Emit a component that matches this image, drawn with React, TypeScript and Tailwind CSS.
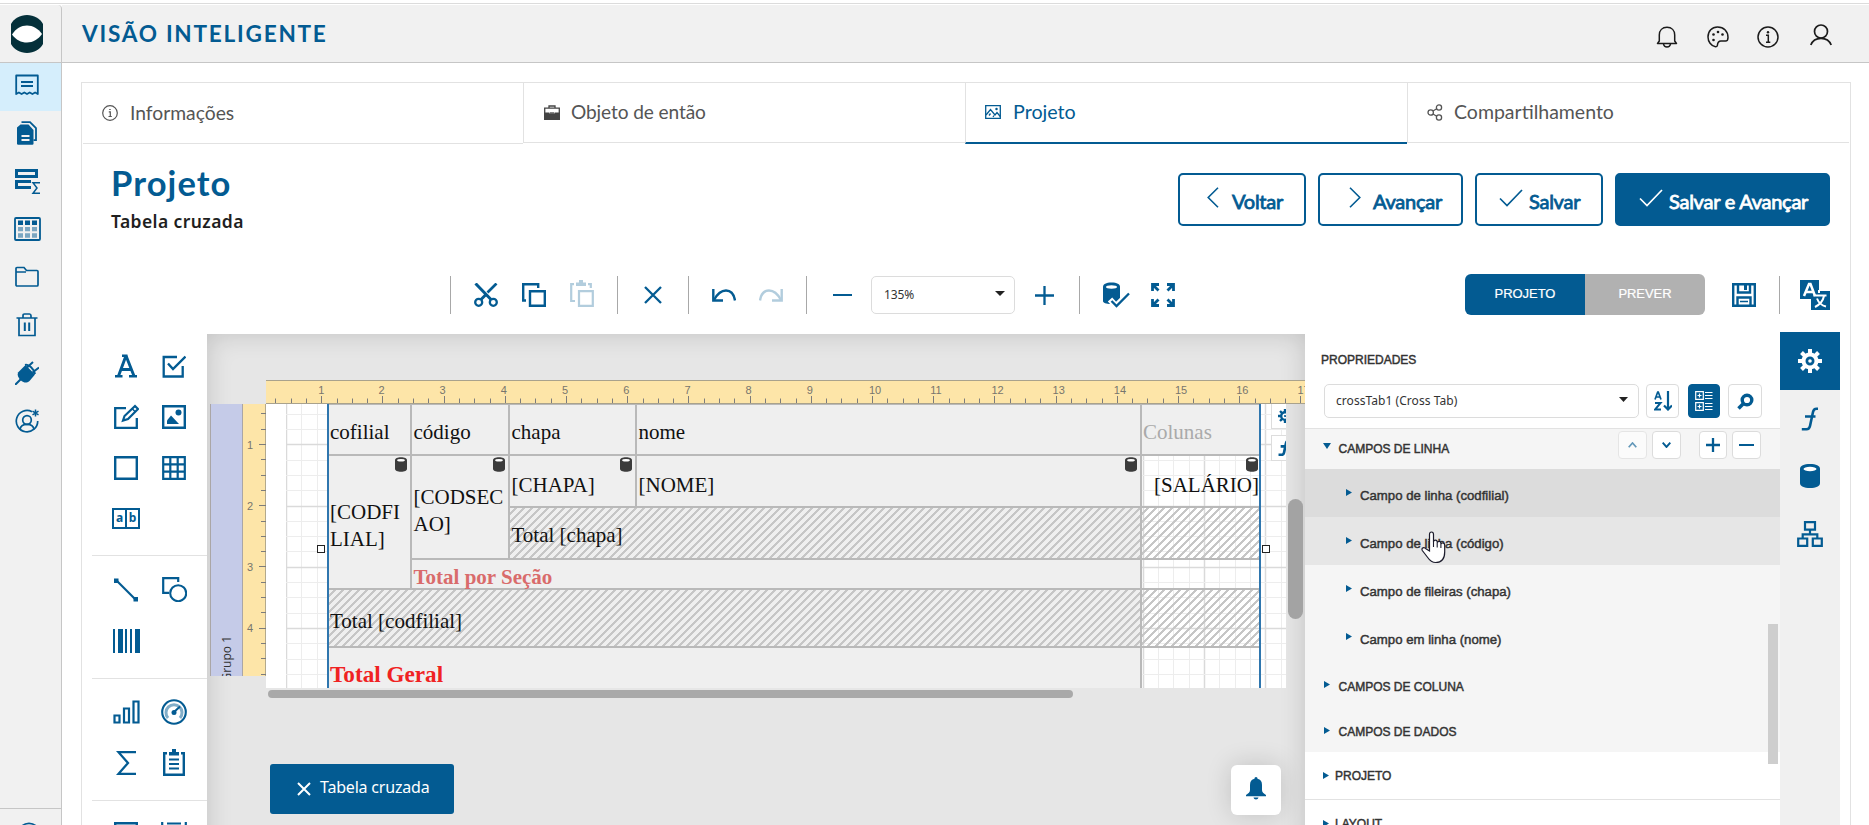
import type { ReactNode } from "react";

const BLUE = "#035b92";

type IconProps = { w?: number; h?: number; vb?: string; color?: string; sw?: number; className?: string; children: ReactNode };

function Icon({ w = 24, h = 24, vb = "0 0 24 24", color = BLUE, sw = 2, className = "", children }: IconProps) {
  return (
    <svg width={w} height={h} viewBox={vb} fill="none" stroke={color} strokeWidth={sw} className={"shrink-0 " + className}>
      {children}
    </svg>
  );
}

function Cylinder({ w, h, color = BLUE }: { w: number; h: number; color?: string }) {
  return (
    <svg width={w} height={h} viewBox="0 0 20 24" className="shrink-0">
      <path d="M0 5C0 1.5 4 0 10 0s10 1.500 10 5v14c0 3.500-4 5-10 5S0 22.500 0 19z" fill={color} />
      <ellipse cx="10" cy="5" rx="6.500" ry="2.200" fill="#fff" />
    </svg>
  );
}

/* ---------- left navigation ---------- */

const navIcons: ReactNode[] = [
  <Icon sw={1.8}>
    <path d="M1.200 21V2.500h21.600V21l-2.700-1.500-2.700 1.500-2.700-1.500L12 21l-2.700-1.500L6.600 21l-2.700-1.500z" strokeLinejoin="round" />
    <path d="M6 9h12M6 13h12" />
  </Icon>,
  <Icon>
    <path d="M6.500 1.200h8.500l6 6v12h-2.500" strokeWidth="1.800" />
    <path d="M5.500 3.500h8L18.500 9v13.500a1.200 1.200 0 0 1-1.200 1.200H3.200A1.200 1.200 0 0 1 2 22.500V6.500z" fill={BLUE} stroke="none" />
    <path d="M6.500 15h8M6.500 19h8" stroke="#f1f1f1" strokeWidth="1.800" />
  </Icon>,
  <Icon w={27} h={27} vb="0 0 27 27" className="mt-px">
    <path d="M2.500 2.500h20v6h-20zM17 13.500H2.500v6H17" strokeWidth="3" />
    <path d="M26 14.700h-7l4 5.300-4 5.300h7" strokeWidth="1.500" />
  </Icon>,
  <Icon w={27} h={24} vb="0 0 27 24" sw={1.8}>
    <rect x="1" y="1" width="25" height="22" rx="1" />
    <path d="M4 5.700h5M11 5.700h5M18 5.700h5" strokeWidth="4.500" />
    <path d="M4 12.200h5M11 12.200h5M18 12.200h5M4 18.500h5M11 18.500h5M18 18.500h5" strokeWidth="4.300" opacity=".5" />
  </Icon>,
  <Icon sw={1.7}>
    <path d="M1 20V3.500A1 1 0 0 1 2 2.500h7l2.500 3H22a1 1 0 0 1 1 1V20a1 1 0 0 1-1 1H2a1 1 0 0 1-1-1zM1 7h10" />
  </Icon>,
  <Icon sw={1.7}>
    <path d="M1.500 5h21M4 5v17.500h16V5M8 5V2.700C8 1.500 8.500 1 9.500 1h5c1 0 1.500.5 1.500 1.700V5" />
    <path d="M9.800 9.500v8.500M14.200 9.500v8.500" strokeWidth="2" />
  </Icon>,
  <Icon sw={2}>
    <path d="M3 11.500 10.500 4 20 13.500 14.500 20c-3 2.500-6 1.500-8 0C3 17 2 14 3 11.500z" fill={BLUE} stroke="none" />
    <path d="M12 6.500 18 1M17.500 11.500 24 6.500M0 24l6-6M10 4c4-1 9 4 10 9" />
  </Icon>,
  <Icon sw={1.7}>
    <path d="M17 2.700A10.700 10.700 0 1 0 22.700 12" />
    <circle cx="12" cy="11" r="4.300" />
    <path d="M5 20.500c.5-3.500 3.500-5.200 7-5.200s6.500 1.700 7 5.200" />
    <path d="M20.500.5v7M17.500 2.200l6 3.600M17.500 5.800l6-3.600" strokeWidth="1.500" />
  </Icon>,
];

function Sidebar() {
  return (
    <nav className="flex h-full w-[62px] shrink-0 flex-col rounded-tr border-r border-[#c6c6c6] bg-[#f1f1f1]">
      <div className="flex h-[58px] shrink-0 items-center justify-center border-b border-[#c6c6c6] pr-[7px]">
        <svg width="32" height="38" viewBox="0 0 32 38">
          <path d="M0 9C3 3.500 9 0 16 0s13 3.500 16 9v20c-3 5.500-9 9-16 9S3 34.500 0 29z" fill="#04303a" />
          <path d="M1 19.500C5 13.500 10 10.500 16 10.500s11 3 15 8.500c-4 5.500-9 8.500-15 8.500S5 25 1 19.500z" fill="#fff" />
        </svg>
      </div>
      {navIcons.map((icon, i) => (
        <div key={i} className={"flex h-12 shrink-0 items-center justify-center pr-[7px] pb-1 " + (i === 0 ? "bg-[#d5eefc]" : "")}>
          {icon}
        </div>
      ))}
      <div className="mt-[361px] flex h-12 shrink-0 justify-center border-t border-[#c6c6c6] pt-[13px] pr-[4px]">
        <Icon sw={1.7}><circle cx="12" cy="12" r="10.700" /></Icon>
      </div>
    </nav>
  );
}

/* ---------- page header ---------- */

function Header() {
  return (
    <header className="flex h-[58px] shrink-0 items-center border-b border-[#c6c6c6] bg-[#f1f1f1] pl-5">
      <h1 className="mt-px font-['Lato',sans-serif] text-[22.600px] leading-none font-bold tracking-[1.750px] text-[#035b92]">VISÃO INTELIGENTE</h1>
      <div className="mr-[37px] ml-auto flex items-center">
        <Icon w={22} h={22} color="#1b1b1b" sw={1.5} className="mt-[7px]" vb="0 0 22 22">
          <path d="M1.500 17.500 3.300 15V9c0-4.500 3-7.700 7.700-7.700s7.700 3.200 7.700 7.700v6l1.800 2.500z" strokeLinejoin="round" />
          <path d="M7.500 18c.3 2 1.700 3 3.500 3s3.200-1 3.500-3" />
        </Icon>
        <Icon w={22} h={22} color="#1b1b1b" sw={1.5} className="mt-[7px] ml-[29px]" vb="0 0 22 22">
          <path d="M10.500 1C5 1 1 5 1 11c0 4.500 3 9 7.500 9.800 1 0 1.700-.5 1.900-1.500.2-2.500.6-4.300 3.600-4.300h4.500c1.700 0 2.500-1.300 2.500-3.500C21 5.500 17 1 10.500 1z" />
          <g fill="#1b1b1b" stroke="none"><circle cx="11" cy="6" r="1.300" /><circle cx="6.500" cy="8.500" r="1.300" /><circle cx="15.500" cy="8.500" r="1.300" /><circle cx="6.500" cy="14" r="1.300" /></g>
        </Icon>
        <Icon w={22} h={22} color="#1b1b1b" sw={1.5} className="mt-[7px] ml-[28px]" vb="0 0 22 22">
          <circle cx="11" cy="11" r="10" />
          <path d="M9 9.300h2.300v7M9 16.300h4.300" />
          <circle cx="11" cy="6.200" r="1.200" fill="#1b1b1b" stroke="none" />
        </Icon>
        <Icon w={22} h={22} color="#1b1b1b" sw={1.700} className="mt-[2px] ml-[31px]" vb="0 0 22 22">
          <circle cx="11" cy="7.500" r="6.500" />
          <path d="M.8 21C2.500 16.500 6.500 14.300 11 14.300S19.500 16.500 21.200 21" />
        </Icon>
      </div>
    </header>
  );
}

/* ---------- wizard tabs and title ---------- */

function StepTabs() {
  const label = "font-['Lato',sans-serif] leading-none ";
  return (
    <div className="flex h-[62px] shrink-0 text-[#555]">
      <div className="ml-px flex h-[61px] w-[440px] items-center border-b border-[#e2e2e2] pb-[4px] pl-[19px]">
        <Icon w={16} h={16} color="#555" sw={1.200} vb="0 0 16 16" className="mt-[3px]">
          <circle cx="8" cy="8" r="7.300" /><path d="M6.800 6.800h1.500v4.700M6.500 11.500h3.300M7.200 4.500h1.500" />
        </Icon>
        <span className={label + "mt-[3px] ml-[12px] text-[19.300px]"}>Informações</span>
      </div>
      <div className="flex h-[60px] w-[442px] items-center border-b border-l border-[#e2e2e2] pb-[4px] pl-5">
        <Icon w={16} h={15} color="#444" sw={1.300} vb="0 0 16 15" className="mt-[3px]">
          <path d="M5 3V1h6v2" /><path d="M.7 3.200h14.600v6H.7z" /><path d="M0 7.500h5.500v1.500h5V7.500H16V15H0z" fill="#444" stroke="none" /><path d="M6 8h4" />
        </Icon>
        <span className={label + "mt-[3px] ml-[11px] text-[19.100px] tracking-[-0.100px]"}>Objeto de então</span>
      </div>
      <div className="flex h-[61px] w-[442px] items-center border-b-2 border-l border-b-[#035b92] border-l-[#e2e2e2] pb-[4px] pl-[19px] text-[#035b92]">
        <Icon w={16} h={14} sw={1.300} vb="0 0 16 14" className="mt-[2px]">
          <path d="M.7.700h14.600v12.600H.700z" /><path d="M1 10l4.500-5.500L10 10l2-2.500 3.300 4M4 10.500l1.500-2M8 12l1-1.500" /><circle cx="11.500" cy="4" r=".6" />
        </Icon>
        <span className={label + "mt-[3px] ml-[12px] text-[19.700px]"}>Projeto</span>
      </div>
      <div className="mr-px flex h-[60px] grow items-center border-b border-l border-[#e2e2e2] pb-[4px] pl-[19px]">
        <Icon w={16} h={17} color="#555" sw={1.300} vb="0 0 16 17" className="mt-[3px]">
          <circle cx="3.700" cy="8.500" r="2.700" /><circle cx="12" cy="3.500" r="2.600" /><circle cx="12" cy="13.500" r="2.600" /><path d="M6 7l3.700-2.200M6 10l3.700 2.200" />
        </Icon>
        <span className={label + "mt-[3px] ml-[11px] text-[19.500px]"}>Compartilhamento</span>
      </div>
    </div>
  );
}

function TitleRow() {
  const btn = "flex h-[53px] items-center rounded-[5px] border-2 border-[#035b92] font-['Lato',sans-serif] text-[20px] leading-none tracking-[-0.250px] [-webkit-text-stroke:0.800px]";
  const check = (c: string) => (
    <Icon w={24} h={18} vb="0 0 24 18" color={c} sw={1.700} className="mb-1"><path d="M1 9.500l7 7L23 1" /></Icon>
  );
  return (
    <div className="flex h-[129px] shrink-0 items-start pt-[17px] pr-[20px] pl-[29px]">
      <div className="pt-px">
        <h2 className="font-['Lato',sans-serif] text-[34.500px] leading-[40px] font-bold tracking-[1.100px] text-[#035b92]">Projeto</h2>
        <p className="mt-[8px] font-['Noto_Sans',sans-serif] text-[17.500px] leading-[20px] font-semibold tracking-[0.400px] text-[#1f1f1f]">Tabela cruzada</p>
      </div>
      <div className="mt-[11px] ml-auto flex gap-3 text-[#035b92]">
        <button className={btn + " w-[128px] pl-[27px]"}>
          <Icon w={12} h={21} vb="0 0 12 21" sw={1.600} className="mb-1"><path d="M11 .8 1.200 10.500 11 20.200" /></Icon>
          <span className="mt-[3px] ml-[13px]">Voltar</span>
        </button>
        <button className={btn + " w-[145px] pl-[29px]"}>
          <Icon w={12} h={21} vb="0 0 12 21" sw={1.600} className="mb-1"><path d="M1 .8l9.800 9.700L1 20.200" /></Icon>
          <span className="mt-[3px] ml-[12px]">Avançar</span>
        </button>
        <button className={btn + " w-[128px] pl-[22px]"}>
          {check(BLUE)}
          <span className="mt-[3px] ml-[6px]">Salvar</span>
        </button>
        <button className={btn + " w-[215px] bg-[#035b92] pl-[22px] text-white"}>
          {check("#fff")}
          <span className="mt-[3px] ml-[6px]">Salvar e Avançar</span>
        </button>
      </div>
    </div>
  );
}

/* ---------- designer toolbar ---------- */

function Sep({ className }: { className: string }) {
  return <div className={"h-[38px] w-px shrink-0 bg-[#a8a8a8] " + className} />;
}

function Toolbar() {
  return (
    <div className="flex h-[42px] shrink-0 items-center">
      <Sep className="ml-[368px]" />
      <Icon className="ml-[23px]" sw={2.300}>
        <circle cx="4.700" cy="19.300" r="3.500" /><circle cx="19.300" cy="19.300" r="3.500" />
        <path d="M1.500.5 17 16.500M7 16.500l5-5" strokeWidth="3" /><path d="M22.500.500 13.500 9.500" strokeWidth="2.700" />
      </Icon>
      <Icon className="ml-6" sw={2.400}><path d="M4 17.500H1.200V1.200h15V5M8 8.200h14.800v14.600H8z" /></Icon>
      <Icon className="mb-[3px] ml-6 opacity-30" h={27} vb="0 0 24 27"><path d="M5 21H1.200V4.200H4M18 4.200h2.800V8M9 11.200h13.800v14.600H9z" strokeWidth="2.200" /><path d="M6 2.500h3V0h4v2.500h3V6H6z" fill={BLUE} stroke="none" /></Icon>
      <Sep className="ml-[23px]" />
      <Icon className="ml-[26px]" w={18} h={18} vb="0 0 18 18" sw={2.300}><path d="M1 1l16 16M17 1 1 17" /></Icon>
      <Sep className="ml-[26px]" />
      <Icon className="ml-[23px]" w={24} h={13} vb="0 0 24 13"><path d="M1.300 0v11.500H11" strokeWidth="2.400" /><path d="M2 11C6 3.500 10 1.500 14 1.500c5 0 8 4 9 10" strokeWidth="2.400" /></Icon>
      <Icon className="ml-[23px] opacity-30" w={24} h={13} vb="0 0 24 13"><path d="M22.700 0v11.500H13" strokeWidth="2.400" /><path d="M22 11C18 3.500 14 1.500 10 1.500c-5 0-8 4-9 10" strokeWidth="2.400" /></Icon>
      <Sep className="ml-[23px]" />
      <div className="ml-[26px] h-[2px] w-[19px] bg-[#035b92]" />
      <div className="ml-[19px] flex h-[38px] w-[144px] items-center justify-between rounded-[5px] border border-[#dcdcdc] pr-[9px] pl-3 font-['Noto_Sans',sans-serif] text-[12px] tracking-[-0.100px] text-[#333]">
        135%
        <svg width="10" height="5" viewBox="0 0 10 5" className="mb-1"><path d="M0 0h10L5 5z" fill="#222" /></svg>
      </div>
      <Icon className="ml-5" w={19} h={19} vb="0 0 19 19" sw={2.300}><path d="M0 9.500h19M9.500 0v19" /></Icon>
      <Sep className="ml-[25px]" />
      <Icon className="ml-[23px]" w={27} h={26} vb="0 0 27 26">
        <path d="M0 5C0 2 3 .5 8.500.5S17 2 17 5v17H8c-5 0-8-1-8-3z" fill={BLUE} stroke="none" />
        <ellipse cx="8.500" cy="5" rx="5.500" ry="1.700" fill="#fff" stroke="none" />
        <path d="M7 17.500l6 6.500L26.500 11" stroke="#fff" strokeWidth="6" /><path d="M8.500 19l5 5L26 11.500" strokeWidth="2.300" />
      </Icon>
      <Icon className="ml-[21px]" sw={2.200}>
        <path d="M1.500 8V1.500H8M1.500 1.500l6 6M16 1.500h6.500V8M22.500 1.500l-6 6M1.500 16v6.500H8M1.500 22.500l6-6M22.500 16v6.500H16M22.500 22.500l-6-6" strokeWidth="2.800" />
      </Icon>
      <div className="ml-auto mb-px flex h-[41px] w-60 overflow-hidden rounded-[6px] font-['Liberation_Sans',sans-serif] text-[13px] tracking-[-0.050px] text-white [-webkit-text-stroke:0.200px]">
        <div className="flex w-1/2 items-center justify-center bg-[#035b92] pb-px">PROJETO</div>
        <div className="flex w-1/2 items-center justify-center bg-[#b1b1b1] pb-px">PREVER</div>
      </div>
      <Icon className="ml-[27px]" sw={2.400}>
        <path d="M1.200 1.200h21.600v21.600H1.200zM6 1.500v8h12v-8M5.500 22.500v-8h13v8" /><path d="M13.500 2v5" strokeWidth="3" /><path d="M8 18.500h8" strokeWidth="1.500" />
      </Icon>
      <Sep className="ml-[23px]" />
      <svg width="30" height="30" viewBox="0 0 30 30" className="mr-[20px] ml-[20px] shrink-0">
        <path d="M0 0h19v11h11v19H11V19H0z" fill={BLUE} />
        <path d="M4 16 9 4h1.500l4.500 12M6 12h7" stroke="#fff" strokeWidth="2.500" fill="none" />
        <path d="M19 10v3M13.500 15.500h13M15 27c5-2.500 8-6 9-11M17 18.500c1.500 4 4.500 7 9 8" stroke="#fff" strokeWidth="2" fill="none" />
      </svg>
    </div>
  );
}

/* ---------- toolbox ---------- */

const toolGroups: { pad: string; items: (ReactNode | null)[] }[] = [
  {
    pad: "pt-[9px] pb-[10px]",
    items: [
      <Icon w={24} h={24}><path d="M4.500 22 11.500 3h1L20 22M7.500 15.500h9" strokeWidth="2.900" /><path d="M8 1.800h5.500M1 22.300h7.500M15 22.300h8" strokeWidth="2.600" /></Icon>,
      <Icon><path d="M15 3H1.700v19.500h19V12" strokeWidth="2.300" /><path d="M6 9.500l5 5.500L23.500 2.500" strokeWidth="2.400" /></Icon>,
      <Icon w={26} h={26} vb="0 0 26 26"><path d="M13 4.200H2.200v19.600h21.600V14" strokeWidth="2.300" /><path d="M10 16.500l1.500-4.500L22 2l3 3-10 10z" strokeWidth="2.200" /><path d="M19 4.500l3.500 3.500" strokeWidth="1.500" /></Icon>,
      <Icon><path d="M1.200 1.200h21.600v21.600H1.200z" strokeWidth="2.400" /><circle cx="16.500" cy="7.500" r="3" fill={BLUE} stroke="none" /><path d="M5 19v-3.500l4-5 8 8.500z" fill={BLUE} stroke="none" /></Icon>,
      <Icon><path d="M1.200 1.200h21.600v21.600H1.200z" strokeWidth="2.400" /></Icon>,
      <Icon><path d="M1.200 1.200h21.600v21.600H1.200zM8.300 1v22M15.700 1v22M1 8.300h22M1 15.700h22" strokeWidth="2.200" /></Icon>,
      <div className="flex h-[21px] w-7 border-2 border-[#035b92] text-center font-['Noto_Sans',sans-serif] text-[12px] leading-[15px] font-bold text-[#035b92]">
        <span className="flex-1 border-r-2 border-[#035b92]">a</span>
        <span className="flex-1">b</span>
      </div>,
      null,
    ],
  },
  {
    pad: "pt-[9px] pb-[11px]",
    items: [
      <Icon><path d="M2 2l20 20" strokeWidth="2.200" /><path d="M0 .5h4.500V5H0zM19.500 19H24v4.500h-4.500z" fill={BLUE} stroke="none" /></Icon>,
      <Icon w={25} h={25} vb="0 0 25 25"><path d="M7 15.800H1.200V1.200h15V5" strokeWidth="2.200" /><circle cx="16.200" cy="16.200" r="8" strokeWidth="2.100" /></Icon>,
      <svg width="27" height="24" viewBox="0 0 27 24" fill={BLUE}><path d="M0 0h2v24H0zM5 0h5v24H5zM12 0h2v24h-2zM17 0h2v24h-2zM22 0h5v24h-5z" /></svg>,
      null,
    ],
  },
  {
    pad: "pt-[8px] pb-[11px]",
    items: [
      <Icon w={27} h={24} vb="0 0 27 24"><path d="M1.500 15.500h5v7h-5zM11 8.500h5v14h-5zM20.500 1.500h5v21h-5z" strokeWidth="2.200" /></Icon>,
      <Icon w={26} h={26} vb="0 0 26 26"><circle cx="13" cy="13" r="11.800" strokeWidth="2.100" /><path d="M7 19a8 8 0 1 1 12 0" strokeWidth="3" opacity=".5" /><path d="M12 14l7-6.500" strokeWidth="2" /><circle cx="13" cy="13.500" r="2.500" fill={BLUE} stroke="none" /></Icon>,
      <Icon w={20} h={24} vb="0 0 20 24"><path d="M20 1.200H2.500L12 12 2.500 22.800H20" strokeWidth="2.300" /></Icon>,
      <Icon w={22} h={28} vb="0 0 22 28"><path d="M4 4.200H1.200v21.600h19.600V4.200H18" strokeWidth="2.400" /><path d="M6 3h3V0h4v3h3v3.500H6z" fill={BLUE} stroke="none" /><path d="M6 10.500h10M6 15h10M6 19.500h10" strokeWidth="2.200" /></Icon>,
    ],
  },
  {
    pad: "pt-[8px]",
    items: [
      <Icon><path d="M1.200 1.200h21.600v21.600H1.200z" strokeWidth="2.400" /></Icon>,
      <Icon w={26} vb="0 0 26 24"><path d="M1.200 0v24M24.800 0v24M6 1.500h14M6 12h14" strokeWidth="2.200" /></Icon>,
    ],
  },
];

function Toolbox() {
  return (
    <div className="w-[125px] shrink-0 pl-[10px]">
      {toolGroups.map((g, i) => (
        <div key={i} className={"grid grid-cols-[48px_48px] border-b border-[#e2e2e2] pl-[10px] " + g.pad}>
          {g.items.map((it, j) => (
            <div key={j} className="flex h-[51px] items-center justify-center pb-[2px]">{it}</div>
          ))}
        </div>
      ))}
    </div>
  );
}

/* ---------- report surface ---------- */

const UNIT = 61.2;

function TopRuler() {
  const ticks = Array.from({ length: 69 }, (_, i) => i + 1).filter((i) => (i * UNIT) / 4 - 6 > 2);
  return (
    <svg width="1039" height="24" className="block shrink-0 bg-[#fde5a8]">
      <path d="M0 .5h1039M0 23.500h1039" stroke="#a9a28c" />
      {ticks.map((i) => {
        const x = Math.round(-6 + (i * UNIT) / 4);
        return <path key={i} d={`M${x + 0.5} ${i % 4 ? 18.500 : 16}V23`} stroke="#7c7c7c" />;
      })}
      {Array.from({ length: 17 }, (_, i) => (
        <text key={i} x={(i > 0 && i < 9 ? -10 : -9) + (i + 1) * UNIT} y="14" fontSize="11" fill="#77756d" fontFamily="Liberation Sans">{i + 1}</text>
      ))}
    </svg>
  );
}

function SideRuler() {
  return (
    <svg width="23" height="272" className="block shrink-0 bg-[#fde5a8]">
      <path d="M22.500 0v272" stroke="#b3a98c" />
      {Array.from({ length: 18 }, (_, i) => {
        const y = Math.round(9.400 + (i * UNIT) / 4);
        return <path key={i} d={`M${(i + 2) % 4 ? 18 : 16} ${y + 0.500}H23`} stroke="#7c7c7c" />;
      })}
      {[1, 2, 3, 4].map((n) => (
        <text key={n} x="4" y={44.500 + (n - 1) * UNIT} fontSize="11" fill="#77756d" fontFamily="Liberation Sans">{n}</text>
      ))}
    </svg>
  );
}

function GridPaper() {
  return (
    <svg width="1000" height="284" className="absolute top-0 left-[20px]">
      {Array.from({ length: 66 }, (_, i) => (
        <path key={i} d={`M${Math.round((i * UNIT) / 4) + 0.5} 0v284`} stroke={i % 4 ? "#ededed" : "#dadada"} strokeWidth={i % 4 ? 1 : 1.500} />
      ))}
      {Array.from({ length: 19 }, (_, i) => (
        <path key={i} d={`M0 ${Math.round(9.700 + (i * UNIT) / 4) + 0.5}h1000`} stroke={(i + 2) % 4 ? "#ededed" : "#dadada"} strokeWidth={(i + 2) % 4 ? 1 : 1.500} />
      ))}
    </svg>
  );
}

const HATCH = "bg-[repeating-linear-gradient(135deg,transparent_0px,transparent_3.200px,#c6c6c6_3.400px,#c6c6c6_5.457px,transparent_5.657px)]";

function Cell({ className, children, bound }: { className: string; children?: ReactNode; bound?: "inner" | "edge" }) {
  return (
    <div className={"relative flex items-center border-[#b9b9b9] " + className}>
      {children}
      {bound && (
        <span className={"absolute top-px " + (bound === "edge" ? "right-px" : "right-[3px]")}>
          <Cylinder w={12} h={15} color="#3b3b3b" />
        </span>
      )}
    </div>
  );
}

function CrossTab() {
  return (
    <div className="absolute top-0 left-[61px] grid h-[300px] w-[934px] grid-cols-[83px_98px_127px_505px_117px] grid-rows-[52px_52px_52px_30px_58px_56px] border-x-2 border-[#2f76ae] font-['Liberation_Serif',serif] text-[21px] leading-[27px] text-[#111]">
      <Cell className="border-t border-r-2 border-b-2 bg-[#efefef] pt-[6px] pl-px">cofilial</Cell>
      <Cell className="border-t border-r-2 border-b-2 bg-[#efefef] pt-[6px] pl-[1.500px]">código</Cell>
      <Cell className="border-t border-r-2 border-b-2 bg-[#efefef] pt-[6px] pl-[1.500px]">chapa</Cell>
      <Cell className="border-t border-r-2 border-b-2 bg-[#efefef] pt-[6px] pl-[1.500px]">nome</Cell>
      <Cell className="border-t border-b-2 bg-[#efefef] pt-[6px] pl-px text-[#aaa]">Colunas</Cell>

      <Cell bound="inner" className="row-span-3 border-r-2 border-b-2 bg-[#efefef] pt-[8px] pl-px">[CODFI<br />LIAL]</Cell>
      <Cell bound="inner" className="row-span-2 border-r-2 border-b-2 bg-[#efefef] pt-[7px] pl-[1.500px]">[CODSEC<br />AO]</Cell>
      <Cell bound="inner" className="border-r-2 border-b-2 bg-[#efefef] pt-[8px] pl-[1.500px]">[CHAPA]</Cell>
      <Cell bound="inner" className="border-r-2 border-b-2 bg-[#efefef] pt-[8px] pl-[1.500px]">[NOME]</Cell>
      <Cell bound="edge" className="justify-end border-b-2 pt-[8px]">[SALÁRIO]</Cell>

      <Cell className={"col-span-2 border-r-2 border-b-2 bg-[#efefef] pt-[4px] pl-[1.500px] " + HATCH}>Total [chapa]</Cell>
      <Cell className={"border-b-2 " + HATCH} />

      <Cell className="col-span-3 border-r-2 border-b-2 bg-[#efefef] pt-[6px] pl-[1.500px] font-bold text-[#d96b6b]">Total por Seção</Cell>
      <Cell className="border-b-2" />

      <Cell className={"col-span-4 border-r-2 border-b-2 bg-[#efefef] pt-[6px] pl-px " + HATCH}>Total [codfilial]</Cell>
      <Cell className={"border-b-2 " + HATCH} />

      <Cell className="col-span-4 border-r-2 bg-[#efefef] pb-[4px] pl-px text-[23.200px] font-bold text-[#f02222]">Total Geral</Cell>
      <Cell className="" />
    </div>
  );
}

function Surface() {
  return (
    <div className="relative mt-[2px] flex h-[560px] w-[1098px] shrink-0 flex-col overflow-hidden bg-[#e6e6e6] shadow-[inset_0_0_26px_rgba(0,0,0,0.160)]">
      <div className="mt-[46px] ml-[59px] flex"><TopRuler /></div>
      <div className="ml-[3px] flex">
        <div className="flex h-[272px] w-[33px] shrink-0 items-start justify-center overflow-hidden border-x border-[#aaa6a6] bg-[#c5cbe8]">
          <span className="mt-[232px] rotate-180 font-['Open_Sans',sans-serif] text-[12px] leading-4 whitespace-nowrap text-[#333] [writing-mode:vertical-rl]">Grupo 1</span>
        </div>
        <SideRuler />
        <div className="relative h-[284px] w-[1020px] shrink-0 overflow-hidden bg-white">
          <GridPaper />
          <CrossTab />
          <div className="absolute top-[141px] left-[51px] size-2 border border-[#222] bg-white" />
          <div className="absolute top-[141px] left-[996px] size-2 border border-[#222] bg-white" />
          <div className="absolute -top-[2px] left-[1005px] flex h-[27px] w-7 items-center border border-[#ddd] bg-white pl-[6px]">
            <Gear size={14} />
          </div>
          <div className="absolute top-[31px] left-[1005px] flex h-[26px] w-7 items-center border border-[#ddd] bg-white pl-[6px]">
            <Fx w={12} h={16} sw={4} />
          </div>
        </div>
      </div>
      <div className="mt-[2px] ml-[61px] h-2 w-[805px] rounded-full bg-[#a9a9a9]" />
      <div className="mt-[66px] ml-[63px] flex h-[51px] w-[1011px] justify-between">
        <button className="flex h-[50px] w-[184px] items-center rounded-[3px] bg-[#035b92] pb-1 pl-[27px] text-white">
          <Icon w={14} h={14} vb="0 0 14 14" color="#fff" sw={2} className="mt-[3px]"><path d="M1 1l12 12M13 1 1 13" /></Icon>
          <span className="ml-[9px] font-['Noto_Sans',sans-serif] text-[16px] tracking-[-0.200px]">Tabela cruzada</span>
        </button>
        <div className="mt-px flex size-[50px] items-center justify-center rounded-[6px] bg-white pb-1 shadow-[0_0_26px_rgba(0,0,0,0.160)]">
          <svg width="20" height="23" viewBox="0 0 20 23" fill={BLUE}>
            <path d="M10 0c1 0 1.500.700 1.500 1.800C14.500 2.500 16 4.500 16 8v5c0 2 1.500 3.500 4 5v1.200H0V18c2.500-1.500 4-3 4-5V8c0-3.500 1.500-5.500 4.500-6.200C8.500.700 9 0 10 0zM7.500 20.500h5c-.3 1.300-1.200 2-2.500 2s-2.200-.700-2.500-2z" />
          </svg>
        </div>
      </div>
      <div className="absolute top-[165px] left-[1081px] h-[120px] w-[15px] rounded-full bg-[#a3a3a3]" />
    </div>
  );
}

/* ---------- properties ---------- */

function Gear({ size, color = BLUE }: { size: number; color?: string }) {
  return (
    <svg width={size} height={size} viewBox="0 0 24 24" fill="none" stroke={color} className="shrink-0">
      <circle cx="12" cy="12" r="6.500" strokeWidth="4" />
      <path d="M12 0v5M12 19v5M0 12h5M19 12h5M3.500 3.500l3.500 3.500M17 17l3.500 3.500M20.500 3.500 17 7M7 17l-3.500 3.500" strokeWidth="4" />
      <circle cx="12" cy="12" r="1.800" fill={color} stroke="none" />
    </svg>
  );
}

function Fx({ w, h, sw = 2.600 }: { w: number; h: number; sw?: number }) {
  return (
    <Icon w={w} h={h} vb="0 0 18 24" sw={sw}>
      <path d="M17 1.800h-1.500c-2 0-3 .8-3.500 3.200L9 19c-.5 2.300-1.500 3.200-3.500 3.200H.8M4 9.500h10.500" />
    </Icon>
  );
}

const Right = () => <svg width="6" height="7" viewBox="0 0 6 7" className="shrink-0"><path d="M0 0l6 3.500L0 7z" fill={BLUE} /></svg>;

function MiniButton({ className, children }: { className: string; children: ReactNode }) {
  return <button className={"flex h-7 shrink-0 items-center justify-center rounded-[4px] border border-[#dcdcdc] bg-white " + className}>{children}</button>;
}

const fields = [
  { text: "Campo de linha (codfilial)", bg: "bg-[#dcdcdc]" },
  { text: "Campo de linha (código)", bg: "bg-[#e6e6e6]" },
  { text: "Campo de fileiras (chapa)", bg: "" },
  { text: "Campo em linha (nome)", bg: "" },
];

function Properties() {
  const tool = "flex h-[34px] items-center justify-center rounded-[4px] border ";
  return (
    <div className="relative flex w-[475px] shrink-0 flex-col bg-white font-['Liberation_Sans',sans-serif] text-[12px] leading-4 text-[#333] [-webkit-text-stroke:0.450px]">
      <h3 className="mt-[20px] ml-[16px]">PROPRIEDADES</h3>
      <div className="mt-[16px] ml-[19px] flex">
        <div className="flex h-[34px] w-[315px] items-center justify-between rounded-[5px] border border-[#dcdcdc] pr-[10px] pl-[11px] font-['Noto_Sans',sans-serif] text-[12px] tracking-[0.050px] [-webkit-text-stroke:0px]">
          <span>crossTab1 (Cross Tab)</span>
          <svg width="9" height="5" viewBox="0 0 9 5" className="mb-1"><path d="M0 0h9L4.500 5z" fill="#222" /></svg>
        </div>
        <button className={tool + "ml-[7px] w-[33px] border-[#dcdcdc]"}>
          <Icon w={18} h={20} vb="0 0 18 20">
            <path d="M1 8.500 3.700 1h.6L7 8.500M2 6h4" strokeWidth="1.700" /><path d="M1 12h5.500L1 18.500h6" strokeWidth="2" /><path d="M14 0v18M10 14.500l4 4 4-4" strokeWidth="2.200" />
          </Icon>
        </button>
        <button className={tool + "ml-[9px] w-[32px] border-[#035b92] bg-[#035b92]"}>
          <Icon w={18} h={20} vb="0 0 18 20" color="#fff" sw={1.200}>
            <path d="M.7.700h7.600v7.600H.700zM.700 11.700h7.600v7.600H.700zM2.500 4.500h4M4.500 2.500v4M2.500 15.500h4M4.500 13.500v4M10 1.500h7.500M10 4.500h7.500M10 7.500h7.500M10 12.500h7.500M10 15.500h7.500M10 18.500h7.500" />
          </Icon>
        </button>
        <button className={tool + "ml-[8px] w-[34px] border-[#dcdcdc]"}>
          <Icon w={17} h={17} vb="0 0 17 17"><circle cx="10" cy="7" r="4.800" strokeWidth="3.400" /><path d="M6.500 10.500 1.500 15.500" strokeWidth="3.600" /></Icon>
        </button>
      </div>

      <div className="mt-[10px] border-t border-[#e2e2e2] bg-[#f5f5f5]">
        <div className="flex h-10 pl-[18px]">
          <svg width="8" height="6" viewBox="0 0 8 6" className="mt-[14px] shrink-0"><path d="M0 0h8L4 6z" fill={BLUE} /></svg>
          <span className="mt-[12px] ml-[7.500px] w-[278.500px]">CAMPOS DE LINHA</span>
          <div className="mt-[2px] flex">
            <MiniButton className="ml-px w-[29px] opacity-60"><Icon w={9} h={6} vb="0 0 9 6" sw={1.700}><path d="M.7 5.300 4.500 1l3.800 4.300" /></Icon></MiniButton>
            <MiniButton className="ml-[5px] w-[29px]"><Icon w={9} h={6} vb="0 0 9 6" sw={1.900}><path d="M.7.700 4.500 5 8.300.700" /></Icon></MiniButton>
            <MiniButton className="ml-[18px] w-[28px]"><Icon w={14} h={14} vb="0 0 14 14" sw={2.300}><path d="M0 7h14M7 0v14" /></Icon></MiniButton>
            <MiniButton className="ml-[5px] w-[29px]"><div className="h-[2px] w-[15px] bg-[#035b92]" /></MiniButton>
          </div>
        </div>
        {fields.map((f) => (
          <div key={f.text} className={"flex h-12 pl-[41px] " + f.bg}>
            <div className="mt-[20px]"><Right /></div>
            <span className="mt-[19px] ml-[8px] text-[13.200px]">{f.text}</span>
          </div>
        ))}
        <div className="flex h-[45px] pl-[19px]">
          <div className="mt-[20px]"><Right /></div>
          <span className="mt-[18px] ml-[8.500px]">CAMPOS DE COLUNA</span>
        </div>
        <div className="flex h-[46px] pl-[19px]">
          <div className="mt-[21px]"><Right /></div>
          <span className="mt-[18px] ml-[8.500px]">CAMPOS DE DADOS</span>
        </div>
      </div>
      <div className="flex h-12 border-b border-[#e2e2e2] pl-[18px]">
        <div className="mt-[20px]"><Right /></div>
        <span className="mt-[16px] ml-[6px]">PROJETO</span>
      </div>
      <div className="flex h-12 pl-[18px]">
        <div className="mt-[20px]"><Right /></div>
        <span className="mt-[16px] ml-[6px]">LAYOUT</span>
      </div>

      <div className="absolute top-[292px] left-[463px] h-[140px] w-[10px] bg-[#cecece]" />
      <svg width="26" height="33" viewBox="0 0 26 33" className="absolute top-[199px] left-[116px]">
        <path d="M8.500 20V3.500C8.500 1.800 9.300 1 10.500 1s2 .8 2 2.500V11c0-1 .7-1.800 1.900-1.800 1 0 1.800.8 1.800 1.800v.8c.2-.9.900-1.500 1.900-1.500 1.100 0 1.800.8 1.800 2v.8c.3-.7.900-1.100 1.700-1.100 1.200 0 2.100.8 2.100 2.200V21c0 6.500-3 10.500-9 10.500-4 0-6-2-8-5L1.300 19.500c-.7-1.200-.3-2.200.6-2.600 1-.5 2.300 0 3.400 1.100z" fill="#fff" stroke="#1c1c2c" strokeWidth="1.200" />
        <path d="M12.500 11v5M16.200 12v4.500M19.900 13v4" stroke="#1c1c2c" strokeWidth="1.100" />
      </svg>
    </div>
  );
}

function SideTabs() {
  return (
    <div className="flex w-[60px] shrink-0 flex-col items-center bg-[#f0f0f0]">
      <div className="flex h-[58px] w-full items-center justify-center bg-[#035b92]"><Gear size={24} color="#fff" /></div>
      <div className="mt-[17px]"><Fx w={18} h={24} /></div>
      <div className="mt-[33px]"><Cylinder w={20} h={24} /></div>
      <div className="mt-[33px]">
        <Icon w={26} h={26} vb="0 0 26 26" sw={2.200}>
          <path d="M8 1.200h10v7.500H8zM1.200 17.500h9v7.300h-9zM15.800 17.500h9v7.300h-9zM13 9v4.300M5.700 17.500v-4.200h14.600v4.200" />
        </Icon>
      </div>
    </div>
  );
}

export default function App() {
  return (
    <div className="flex h-[825px] w-[1869px] flex-col overflow-hidden bg-white pt-[3px]">
      <div className="mb-px h-px shrink-0 bg-[#dcdcdc]" />
      <div className="flex h-[820px] shrink-0">
        <Sidebar />
        <div className="flex w-[1807px] flex-col">
          <Header />
          <main className="mt-[19px] mr-[18px] ml-[19px] flex h-[743px] shrink-0 flex-col overflow-hidden border-x border-t border-[#e2e2e2]">
            <StepTabs />
            <TitleRow />
            <Toolbar />
            <div className="mt-[16px] flex h-[560px] shrink-0">
              <Toolbox />
              <Surface />
              <Properties />
              <SideTabs />
            </div>
          </main>
        </div>
      </div>
    </div>
  );
}
